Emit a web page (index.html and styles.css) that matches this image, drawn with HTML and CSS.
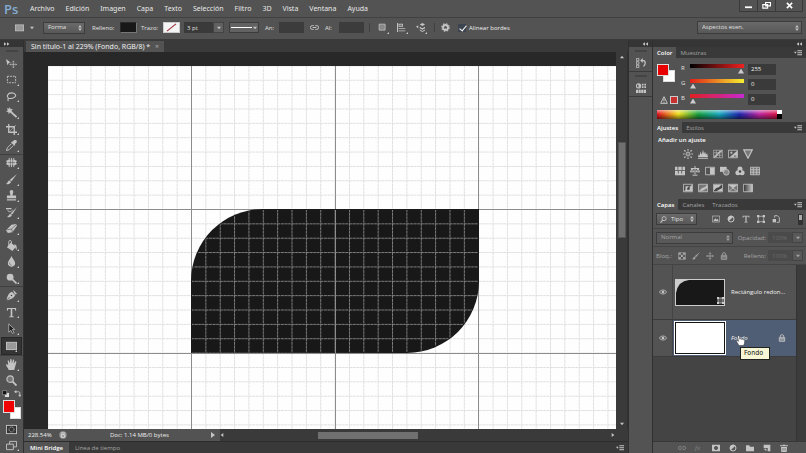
FILE: index.html
```html
<!DOCTYPE html>
<html lang="es">
<head>
<meta charset="utf-8">
<title>Sin título-1</title>
<link rel="stylesheet" href="styles.css">
</head>
<body>
<svg class="sprite" aria-hidden="true">
  <symbol id="move" viewBox="0 0 12 12"><path fill="currentColor" d="M0 1l5 4-2 .4L1.600 8z"/><path fill="none" stroke="currentColor" d="M8 3v8M4 7h8M7 4.500l1-1 1 1M7 9.500l1 1 1-1M5.500 6l-1 1 1 1M10.500 6l1 1-1 1" stroke-width=".7"/></symbol>
  <symbol id="marquee" viewBox="0 0 12 12"><rect x="1.500" y="2.500" width="9" height="7" fill="none" stroke="currentColor" stroke-dasharray="2 1"/></symbol>
  <symbol id="lasso" viewBox="0 0 12 12"><path fill="none" stroke="currentColor" stroke-width="1.200" d="M3 8C0 6 2 2 6 2s6 3 3 5-5 1-6 1c-2 1 0 2-1 3"/></symbol>
  <symbol id="wand" viewBox="0 0 12 12"><path fill="none" stroke="currentColor" stroke-width="2" d="M5 5l6.500 6"/><path fill="currentColor" d="M4 0l1 2.500L7.500 2 6 4l1 2-2.500-.5L3 8l-.5-2.500L0 5l2-1.500L1 1l2.300 1z"/></symbol>
  <symbol id="crop" viewBox="0 0 12 12"><path fill="none" stroke="currentColor" stroke-width="1.400" d="M3 0v9h9M0 3h9v9"/><path stroke="currentColor" stroke-width=".6" d="M4 8l7-7"/></symbol>
  <symbol id="dropper" viewBox="0 0 12 12"><path fill="currentColor" d="M7 2l2-2c2-.5 3.500 1 2.500 2.700L9.500 4.500l.7.700-1 1L5.500 2.600l1-1z"/><path fill="none" stroke="currentColor" d="M6 4L1.500 8.500.5 11.500l3-1L8 6"/></symbol>
  <symbol id="heal" viewBox="0 0 12 12"><rect x="1" y="3" width="10" height="6" rx="2" fill="currentColor"/><path stroke="currentColor" d="M3.500 1v10M6 1v10M8.500 1v10M0 4.500h12M0 7.500h12"/><path stroke="#555" stroke-width=".6" d="M4.800 3v6M7.300 3v6M2 6h8"/></symbol>
  <symbol id="brush" viewBox="0 0 12 12"><path fill="currentColor" d="M12 0L6 8 4 6.500zM3.500 7L5.500 8.500C5 11 2 12 0 10.500c2 0 1.500-3 3.500-3.500z"/></symbol>
  <symbol id="stamp" viewBox="0 0 12 12"><path fill="currentColor" d="M4 2a2 2 0 0 1 4 0L7 6h4v3H1V6h4zM1 10h10v1.500H1z"/></symbol>
  <symbol id="history" viewBox="0 0 12 12"><path fill="currentColor" d="M12 0L7 8 5 7zM4.500 7.500l2 1C6 11 3 12 1 10.500c2 0 1.500-2 3.500-3zM0 1h6v1.500H0z"/><path fill="none" stroke="currentColor" d="M2 3c0 3 4 3 5 0"/></symbol>
  <symbol id="eraser" viewBox="0 0 12 12"><path fill="currentColor" d="M6 2l5-1 1 2-5 7-5 1-2-3z"/><path fill="none" stroke="#5c5c5c" stroke-width=".8" d="M1 7.500l5-1 5.500-5M6 6.500L7 10"/></symbol>
  <symbol id="bucket" viewBox="0 0 12 12"><path fill="currentColor" d="M5 3l6 4-4 5-6-4z"/><path fill="none" stroke="currentColor" d="M6 6V2c0-2-3-2-3 0v5"/><path fill="currentColor" d="M9 5c3 0 3 3 2.500 6C10 9 10 7 9 5z"/></symbol>
  <symbol id="drop" viewBox="0 0 12 12"><path fill="currentColor" d="M6 0c1 3 4 5 4 8 0 5-8 5-8 0 0-3 3-5 4-8z"/><path stroke="#777" fill="none" d="M4 7c-.5 2 .5 3 2 3"/></symbol>
  <symbol id="dodge" viewBox="0 0 12 12"><circle cx="4.500" cy="4.500" r="3.700" fill="currentColor"/><path stroke="currentColor" stroke-width="1.800" d="M7 7l4.500 4.500"/></symbol>
  <symbol id="pen" viewBox="0 0 12 12"><path fill="currentColor" d="M8 0l4 4-2 1-2-3.500zM6.500 2L10 5.500C9 9 5 10 1 11.500L4.500 8 4 7.500.5 11C1.500 7 3 3 6.500 2z"/><circle cx="6" cy="6" r=".9" fill="#444"/></symbol>
  <symbol id="type" viewBox="0 0 12 12"><path fill="currentColor" d="M1 1h10v3h-.8L9.500 2.200H6.900v7.800l1.600.4v.8h-5v-.8l1.600-.4V2.200H2.500L1.800 4H1z"/></symbol>
  <symbol id="pick" viewBox="0 0 12 12"><path fill="#222" stroke="currentColor" stroke-width=".8" d="M3 1l6.500 6H7l1.700 3.500-1.700.8L5.400 8 3 10z"/></symbol>
  <symbol id="rect" viewBox="0 0 12 12"><rect x=".5" y="2.500" width="11" height="8" fill="#999" stroke="currentColor"/></symbol>
  <symbol id="hand" viewBox="0 0 12 12"><path fill="currentColor" d="M3 12C2 9 0 8 0 6c1-.6 2 .5 2.500 1L1.800 2c.8-1 1.600 0 1.700.6L4.300 5 4.600.6c.8-1 1.600-.2 1.600.4l.2 4L7.500 1c.8-.8 1.600 0 1.400.7L8.400 5.500l1.700-3c1-.5 1.400.4 1.200 1L9.800 9 9 12z"/></symbol>
  <symbol id="zoom" viewBox="0 0 12 12"><circle cx="4.500" cy="4.500" r="3.500" fill="#777" stroke="currentColor" stroke-width="1.300"/><path stroke="currentColor" stroke-width="2" d="M7.200 7.200l4.300 4.300"/></symbol>
  <symbol id="mask" viewBox="0 0 12 12"><rect x=".5" y="1.500" width="11" height="9" fill="#333" stroke="currentColor"/><circle cx="6" cy="6" r="2.700" fill="#333" stroke="currentColor" stroke-dasharray="1 .6"/></symbol>
  <symbol id="screen" viewBox="0 0 12 12"><path fill="#555" stroke="currentColor" d="M4 1.500h7.500v6H4z"/><path fill="#555" stroke="currentColor" d="M.5 4.500H8v6H.5z"/></symbol>
  <symbol id="swap" viewBox="0 0 12 12"><path fill="none" stroke="currentColor" stroke-width="1.500" d="M3 3h5q2 0 2 2v4"/><path fill="currentColor" d="M4 0v6L0 3zM7 8h6l-3 4z"/></symbol>
  <symbol id="default" viewBox="0 0 12 12"><path fill="#ddd" d="M5 5h7v7H5z"/><path fill="#111" stroke="#aaa" d="M1 1h7v7H1z"/></symbol>
  <symbol id="link" viewBox="0 0 12 12"><path fill="none" stroke="currentColor" stroke-width="1.300" d="M5 3.500H3a2.500 2.500 0 0 0 0 5h2M7 3.500h2a2.500 2.500 0 0 1 0 5H7M3.500 6h5"/></symbol>
  <symbol id="combine" viewBox="0 0 12 12"><path fill="#888" stroke="currentColor" d="M1.500 1.500h8v8h-8z"/></symbol>
  <symbol id="align" viewBox="0 0 12 12"><path fill="currentColor" d="M0 0h1.300v12H0zM2 1h6v4H2zM2 7h9v1H2zM2 10h9v1H2z"/><path fill="#777" d="M3 2h4v2H3z"/></symbol>
  <symbol id="arrange" viewBox="0 0 12 12"><path fill="currentColor" d="M5 2l3.500-2L12 2 8.500 4zM5 5l3.500 2L12 5v2L8.500 9 5 7zM5 8.500l3.500 2 3.500-2v1.500L8.500 12 5 10zM0 5l3-2v4z"/></symbol>
  <symbol id="gear" viewBox="0 0 12 12"><circle cx="6" cy="6" r="3.300" fill="none" stroke="currentColor" stroke-width="2.600"/><circle cx="6" cy="6" r="5" fill="none" stroke="currentColor" stroke-width="1.600" stroke-dasharray="2 1.930"/></symbol>
  <symbol id="menu" viewBox="0 0 12 12"><path fill="currentColor" d="M0 4h4L2 7zM5 2h7v1.300H5zM5 5h7v1.300H5zM5 8h7v1.300H5z"/></symbol>
  <symbol id="spin" viewBox="0 0 6 10"><path fill="currentColor" d="M0 4l3-4 3 4zM0 6h6l-3 4z"/></symbol>
  <symbol id="down" viewBox="0 0 6 6"><path fill="currentColor" d="M0 1h6L3 5z"/></symbol>
  <symbol id="left" viewBox="0 0 6 6"><path fill="currentColor" d="M5 0v6L1 3z"/></symbol>
  <symbol id="right" viewBox="0 0 6 6"><path fill="currentColor" d="M1 0l4 3-4 3z"/></symbol>
  <symbol id="up" viewBox="0 0 6 6"><path fill="currentColor" d="M0 5l3-4 3 4z"/></symbol>
  <symbol id="collapse" viewBox="0 0 10 6"><path fill="currentColor" d="M5 0v6L1 3zM10 0v6L6 3z"/></symbol>
  <symbol id="expand" viewBox="0 0 10 6"><path fill="currentColor" d="M0 0l4 3-4 3zM5 0l4 3-4 3z"/></symbol>
  <symbol id="histpanel" viewBox="0 0 12 12"><path fill="none" stroke="currentColor" d="M.5.5h3v3h-3zM.5 4.500h3v3h-3zM.5 8.500h3v3h-3z"/><path fill="none" stroke="currentColor" stroke-width="1.500" d="M7 3h2q2 0 2 3c0 2-1 3-2 4"/><path fill="currentColor" d="M8 0v6L5 3z"/></symbol>
  <symbol id="props" viewBox="0 0 12 12"><circle cx="3" cy="3.500" r="2.500" fill="none" stroke="currentColor" stroke-width="1.300"/><path fill="currentColor" d="M3 1a2.500 2.500 0 0 1 0 5zM7 1h2v2H7zM10 1h2v2h-2zM7 4h2v2H7zM10 4h2v2h-2zM0 8h12v4H0z"/><path stroke="#555" d="M3 8v4M6 8v4M9 8v4" stroke-width=".6"/></symbol>
  <symbol id="warn" viewBox="0 0 12 12"><path fill="none" stroke="currentColor" stroke-width="1.500" d="M6 1l5 10H1zM6 4v4M6 9v1.300"/></symbol>
  <symbol id="sun" viewBox="0 0 12 12"><circle cx="6" cy="6" r="2.400" fill="#777" stroke="currentColor"/><path stroke="currentColor" stroke-width="1.300" d="M6 0v2M6 10v2M0 6h2M10 6h2M1.500 1.500L3 3M9 9l1.500 1.500M1.500 10.500L3 9M9 3l1.500-1.500"/></symbol>
  <symbol id="levels" viewBox="0 0 12 12"><path fill="currentColor" d="M0 10l1-4 1 2 1-5 1.500 4L6 1l1.200 5L8.500 3l1 4 1.500-2 1 5zM0 11h12v1H0z"/></symbol>
  <symbol id="curves" viewBox="0 0 12 12"><path fill="none" stroke="currentColor" d="M.5 1.500h11v9H.5zM4 2v8M8 2v8M1 4.500h10M1 7.500h10" stroke-width=".7"/><path fill="none" stroke="currentColor" stroke-width="1.600" d="M1 10C5 9 6 3 11 2"/></symbol>
  <symbol id="expo" viewBox="0 0 12 12"><path fill="none" stroke="currentColor" d="M.5 1.500h11v9H.5z"/><path fill="currentColor" d="M11 2v8H2z"/><path stroke="currentColor" d="M2.500 4.500h3M4 3v3"/><path stroke="#444" d="M7 8.500h3"/></symbol>
  <symbol id="vibrance" viewBox="0 0 12 12"><path fill="#777" stroke="currentColor" stroke-width="1.400" d="M.8 1h10.400L6 11z"/></symbol>
  <symbol id="hue" viewBox="0 0 12 12"><path fill="currentColor" d="M0 1h3v4H0zM4 1h4v4H4zM9 1h3v4H9zM0 6h12v5H0z"/><path stroke="#555" d="M4 6v3M8 6v3"/></symbol>
  <symbol id="balance" viewBox="0 0 12 12"><path fill="none" stroke="currentColor" stroke-width="1.200" d="M6 0v10M3 11h6M1 3h10M2.500 3L.5 7h4zM9.500 3l-2 4h4z"/></symbol>
  <symbol id="bw" viewBox="0 0 12 12"><path fill="none" stroke="currentColor" d="M.5 1.500h11v9H.5z"/><path fill="currentColor" d="M6 2h5v8H6z"/></symbol>
  <symbol id="photo" viewBox="0 0 12 12"><path fill="currentColor" d="M0 1h8v6H0z"/><circle cx="7.500" cy="7.500" r="3.500" fill="#888" stroke="currentColor"/></symbol>
  <symbol id="mixer" viewBox="0 0 12 12"><circle cx="6" cy="3.500" r="3" fill="currentColor"/><circle cx="3.500" cy="8" r="3" fill="currentColor"/><circle cx="8.500" cy="8" r="3" fill="currentColor"/><circle cx="6" cy="6.600" r="1.500" fill="#444"/></symbol>
  <symbol id="table" viewBox="0 0 12 12"><path fill="#777" stroke="currentColor" d="M.5 1.500h11v9H.5zM.5 4.500h11M.5 7.500h11M4 1.500v9M8 1.500v9"/></symbol>
  <symbol id="invert" viewBox="0 0 12 12"><path fill="none" stroke="currentColor" d="M.5 1.500h11v9H.5z"/><path fill="currentColor" d="M1 10l10-8v8zM3 4h4v4H3z"/><path fill="#444" d="M5 6l3-2v4H5z"/></symbol>
  <symbol id="poster" viewBox="0 0 12 12"><path fill="#777" stroke="currentColor" d="M.5 1.500h11v9H.5z"/><path fill="currentColor" d="M1 10l4-4 3-1 3-3v4L6 9z"/></symbol>
  <symbol id="thresh" viewBox="0 0 12 12"><path fill="#444" stroke="currentColor" d="M.5 1.500h11v9H.5z"/><path fill="currentColor" d="M1 2h9L7 5 4 6 1 9zM11 6v4H4l3-2z"/></symbol>
  <symbol id="select" viewBox="0 0 12 12"><path fill="#777" stroke="currentColor" d="M.5 1.500h11v9H.5zM1 2l10 8M11 2L1 10"/><path fill="currentColor" d="M1 2h10L6 6z"/></symbol>
  <linearGradient id="grey"><stop stop-color="#333"/><stop offset="1" stop-color="#ccc"/></linearGradient>
  <symbol id="gmap" viewBox="0 0 12 12"><path fill="url(#grey)" stroke="currentColor" d="M.5 1.500h11v9H.5z"/></symbol>
  <symbol id="image" viewBox="0 0 12 12"><path fill="#555" stroke="currentColor" d="M.5 1.500h11v9H.5z"/><path fill="currentColor" d="M2 9l3-4 2 2 1.500-1.500L10 9z"/></symbol>
  <symbol id="adjust" viewBox="0 0 12 12"><circle cx="6" cy="6" r="4.500" fill="#555" stroke="currentColor" stroke-width="1.500"/><path fill="currentColor" d="M2.500 9.500l7-7A5 5 0 0 0 2.500 9.500z"/></symbol>
  <symbol id="shape" viewBox="0 0 12 12"><path fill="none" stroke="currentColor" d="M2 2h8v8H2z"/><path fill="currentColor" d="M0 0h3.500v3.500H0zM8.500 0H12v3.500H8.500zM0 8.500h3.500V12H0zM8.500 8.500H12V12H8.500z"/></symbol>
  <symbol id="smart" viewBox="0 0 12 12"><path fill="none" stroke="currentColor" stroke-width="1.300" d="M4 4V1h4l3 3v7H7"/><path fill="currentColor" d="M1 6h5v5H1z"/></symbol>
  <symbol id="checker" viewBox="0 0 12 12"><path fill="none" stroke="currentColor" d="M1 1h10v10H1z"/><path fill="currentColor" d="M1 1h3.300v3.300H1zM7.600 1H11v3.300H7.600zM4.300 4.300h3.300v3.300H4.300zM1 7.600h3.300V11H1zM7.600 7.600H11V11H7.600z"/></symbol>
  <symbol id="cross" viewBox="0 0 12 12"><path fill="none" stroke="currentColor" stroke-width="1.200" d="M6 1v10M1 6h10M4.500 2.500L6 1l1.500 1.500M4.500 9.500L6 11l1.500-1.500M2.500 4.500L1 6l1.500 1.500M9.500 4.500L11 6 9.500 7.500"/></symbol>
  <symbol id="lock" viewBox="0 0 12 12"><path fill="none" stroke="currentColor" stroke-width="1.300" d="M3.500 5V3.500a2.500 2.500 0 0 1 5 0V5M2 5h8v6H2zM2 7h8M2 9h8"/></symbol>
  <symbol id="eye" viewBox="0 0 12 12"><path fill="none" stroke="currentColor" stroke-width="1.200" d="M.5 6C3 2 9 2 11.500 6 9 10 3 10 .5 6z"/><circle cx="6" cy="6" r="2" fill="currentColor"/></symbol>
  <symbol id="addmask" viewBox="0 0 12 12"><path fill="currentColor" fill-rule="evenodd" d="M0 1h12v10H0zM6 3a3 3 0 1 0 .01 0z"/></symbol>
  <symbol id="folder" viewBox="0 0 12 12"><path fill="currentColor" d="M0 2h5l1 2h6v7H0z"/></symbol>
  <symbol id="new" viewBox="0 0 12 12"><path fill="currentColor" d="M1 1h10v10H7V6H1z"/><path fill="currentColor" d="M1 7l4 4V7z"/></symbol>
  <symbol id="trash" viewBox="0 0 12 12"><path fill="currentColor" d="M0 2h4V1h4v1h4v1.500H0zM1.500 4.500h9L10 12H2z"/><path stroke="#555" d="M4.500 6v4M7.500 6v4"/></symbol>
  <symbol id="glass" viewBox="0 0 12 12"><circle cx="7" cy="4.500" r="3.500" fill="none" stroke="currentColor" stroke-width="1.500"/><path stroke="currentColor" stroke-width="2" d="M4.500 7L1 11.500"/></symbol>
</svg>

<header class="menubar">
  <span class="logo">Ps</span>
  <nav class="menus" aria-label="Menú">
    <a href="#">Archivo</a><a href="#">Edición</a><a href="#">Imagen</a><a href="#">Capa</a><a href="#">Texto</a><a href="#">Selección</a><a href="#">Filtro</a><a href="#">3D</a><a href="#">Vista</a><a href="#">Ventana</a><a href="#">Ayuda</a>
  </nav>
  <div class="winbtns">
    <button aria-label="Minimizar"><svg viewBox="0 0 10 8"><path d="M1 5h8v2H1z" fill="#fff"/></svg></button>
    <button aria-label="Restaurar"><svg viewBox="0 0 10 8"><path d="M4 .5h5.500v4H4z M.8 3h5.500v4H.8z" fill="#555" stroke="#fff" stroke-width="1.300"/></svg></button>
    <button class="close" aria-label="Cerrar"><svg viewBox="0 0 10 8"><path d="M2 1l6 6M8 1L2 7" stroke="#fff" stroke-width="1.800"/></svg></button>
  </div>
</header>

<section class="options" aria-label="Opciones">
  <button class="preset" aria-label="Rectángulo"><svg class="i10"><use href="#rect"/></svg><svg class="i4"><use href="#down"/></svg></button>
  <span class="pick mode"><select aria-label="Modo"><option>Forma</option></select><svg><use href="#spin"/></svg></span>
  <span class="lbl fill">Relleno:</span><button class="paint dark" aria-label="Relleno"></button>
  <span class="lbl stroke">Trazo:</span><button class="paint none" aria-label="Trazo"><svg viewBox="0 0 16 10"><path d="M3 9L13 1" stroke="#a0303c" stroke-width="1.300"/></svg></button>
  <input class="size" aria-label="Grosor" value="3 pt"><button class="drop" aria-label="Grosores"><svg class="i4"><use href="#down"/></svg></button>
  <button class="line" aria-label="Tipo de trazo"><i></i><svg class="i4"><use href="#down"/></svg></button>
  <label class="dim">An: <input></label>
  <svg class="i10 chain"><use href="#link"/></svg>
  <label class="dim">Al: <input></label>
  <div class="ops">
    <button class="more" aria-label="Combinar"><svg class="i10"><use href="#combine"/></svg></button>
    <button class="more" aria-label="Alinear"><svg class="i10"><use href="#align"/></svg></button>
    <button class="more" aria-label="Organizar"><svg class="i10"><use href="#arrange"/></svg></button>
  </div>
  <button class="gear more" aria-label="Geometría"><svg class="i10"><use href="#gear"/></svg></button>
  <label class="check"><input type="checkbox" checked>Alinear bordes</label>
  <span class="pick space"><select aria-label="Espacio de trabajo"><option>Aspectos esen.</option></select><svg><use href="#spin"/></svg></span>
</section>

<main class="work">
  <aside class="tools">
    <div class="cap"><svg><use href="#expand"/></svg></div>
    <div class="grip"></div>
    <div class="toollist">
      <button aria-label="Mover"><svg><use href="#move"/></svg></button>
      <button class="more" aria-label="Marco"><svg><use href="#marquee"/></svg></button>
      <button class="more" aria-label="Lazo"><svg><use href="#lasso"/></svg></button>
      <button class="more" aria-label="Varita"><svg><use href="#wand"/></svg></button>
      <button class="more" aria-label="Recortar"><svg><use href="#crop"/></svg></button>
      <button class="more" aria-label="Cuentagotas"><svg><use href="#dropper"/></svg></button>
      <button class="more rule" aria-label="Corrector"><svg><use href="#heal"/></svg></button>
      <button class="more" aria-label="Pincel"><svg><use href="#brush"/></svg></button>
      <button class="more" aria-label="Tampón"><svg><use href="#stamp"/></svg></button>
      <button class="more" aria-label="Pincel de historia"><svg><use href="#history"/></svg></button>
      <button class="more" aria-label="Borrador"><svg><use href="#eraser"/></svg></button>
      <button class="more" aria-label="Bote"><svg><use href="#bucket"/></svg></button>
      <button class="more" aria-label="Desenfocar"><svg><use href="#drop"/></svg></button>
      <button class="more" aria-label="Sobreexponer"><svg><use href="#dodge"/></svg></button>
      <button class="more rule" aria-label="Pluma"><svg><use href="#pen"/></svg></button>
      <button class="more" aria-label="Texto"><svg><use href="#type"/></svg></button>
      <button class="more" aria-label="Selección"><svg><use href="#pick"/></svg></button>
      <button class="more on" aria-label="Rectángulo"><svg><use href="#rect"/></svg></button>
      <button class="more rule" aria-label="Mano"><svg><use href="#hand"/></svg></button>
      <button aria-label="Zoom"><svg><use href="#zoom"/></svg></button>
    </div>
    <div class="mini"><svg><use href="#default"/></svg><svg><use href="#swap"/></svg></div>
    <div class="swatches"><button class="bg" aria-label="Fondo"></button><button class="fg" aria-label="Frontal"></button></div>
    <button class="foot" aria-label="Máscara rápida"><svg><use href="#mask"/></svg></button>
    <button class="foot more" aria-label="Pantalla"><svg><use href="#screen"/></svg></button>
  </aside>

  <section class="doc">
    <div class="doctabs"><button class="doctab">Sin título-1 al 229% (Fondo, RGB/8) * <span>×</span></button></div>
    <div class="stage">
      <svg class="canvas" viewBox="0 0 568 363" preserveAspectRatio="xMinYMin slice" role="img" aria-label="Rectángulo redondeado">
        <defs>
          <pattern id="gv" x="143" y="143" width="14.360" height="14.360" patternUnits="userSpaceOnUse"><path d="M.5 0v14.360M0 .5h14.360" stroke="#dcdcdc" stroke-width=".9" stroke-dasharray="3 .6"/></pattern>
          <pattern id="gd" x="143" y="143" width="14.360" height="14.360" patternUnits="userSpaceOnUse"><path d="M.5 0v14.360M0 .5h14.360" stroke="#8a8a8a" stroke-width=".9" stroke-dasharray="3 .6"/></pattern>
        </defs>
        <path fill="#fefefe" d="M0 0h568v363H0z"/>
        <path fill="url(#gv)" d="M0 0h568v363H0z"/>
        <path stroke="#8c8c8c" fill="none" d="M143.500 0v363M287.500 0v363M430.500 0v363M0 143.500h568M0 287.500h568"/>
        <path fill="#181818" d="M143 287V215A72 72 0 0 1 215 143H431V215A72 72 0 0 1 359 287z"/>
        <path fill="url(#gd)" d="M144 287V215A71 71 0 0 1 215 144H430V215A71 71 0 0 1 359 286L144 287z"/>
        <path stroke="#8c8c8c" fill="none" d="M287.500 144v143"/>
      </svg>
      <div class="vscroll"><svg class="i4"><use href="#up"/></svg><i></i><svg class="i4"><use href="#down"/></svg></div>
    </div>
    <div class="status">
      <span class="zoomval">228.54%</span>
      <svg class="i8" viewBox="0 0 12 12"><circle cx="6" cy="6" r="5.500" fill="#999"/><path d="M3 3h6M3.500 5.500h5v4h-5z" stroke="#eee" fill="none"/></svg>
      <span class="info">Doc: 1.14 MB/0 bytes</span>
      <svg class="i6"><use href="#right"/></svg>
      <div class="hscroll"><svg class="i4"><use href="#left"/></svg><i></i><svg class="i4"><use href="#right"/></svg></div>
    </div>
    <div class="tabs bottom"><button class="on">Mini Bridge</button><button>Línea de tiempo</button><svg class="pm"><use href="#menu"/></svg></div>
  </section>

  <aside class="dock">
    <div class="cap end"><svg><use href="#collapse"/></svg></div>
    <div class="grip"></div><button aria-label="Historia"><svg><use href="#histpanel"/></svg></button>
    <div class="grip"></div><button aria-label="Propiedades"><svg><use href="#props"/></svg></button>
  </aside>

  <aside class="panels">
    <div class="cap end"><svg><use href="#collapse"/></svg></div>
    <div class="tabs"><button class="on">Color</button><button>Muestras</button><svg class="pm"><use href="#menu"/></svg></div>
    <div class="color">
      <div class="pair">
        <div class="chips"><i class="white"></i><i class="red"></i></div>
        <div class="gamut"><svg><use href="#warn"/></svg><i></i></div>
      </div>
      <div class="sliders">
        <label class="chan r"><span>R</span><input type="range" min="0" max="255" value="255"><output>255</output></label>
        <label class="chan g"><span>G</span><input type="range" min="0" max="255" value="0"><output>0</output></label>
        <label class="chan b"><span>B</span><input type="range" min="0" max="255" value="0"><output>0</output></label>
      </div>
      <div class="spectrum"><i></i></div>
    </div>

    <div class="tabs"><button class="on">Ajustes</button><button>Estilos</button><svg class="pm"><use href="#menu"/></svg></div>
    <div class="adjust">
      <p>Añadir un ajuste</p>
      <div><svg><use href="#sun"/></svg><svg><use href="#levels"/></svg><svg><use href="#curves"/></svg><svg><use href="#expo"/></svg><svg><use href="#vibrance"/></svg></div>
      <div><svg><use href="#hue"/></svg><svg><use href="#balance"/></svg><svg><use href="#bw"/></svg><svg><use href="#photo"/></svg><svg><use href="#mixer"/></svg><svg><use href="#table"/></svg></div>
      <div><svg><use href="#invert"/></svg><svg><use href="#poster"/></svg><svg><use href="#thresh"/></svg><svg><use href="#select"/></svg><svg><use href="#gmap"/></svg></div>
    </div>

    <div class="tabs"><button class="on">Capas</button><button>Canales</button><button>Trazados</button><svg class="pm"><use href="#menu"/></svg></div>
    <div class="row filter">
      <span class="pick kind"><svg class="glass"><use href="#glass"/></svg><select aria-label="Filtro"><option>Tipo</option></select><svg><use href="#spin"/></svg></span>
      <div class="kinds"><svg><use href="#image"/></svg><svg><use href="#adjust"/></svg><svg><use href="#type"/></svg><svg><use href="#shape"/></svg><svg><use href="#smart"/></svg></div>
      <button class="toggle" aria-label="Activar filtro"></button>
    </div>
    <div class="row dim-row">
      <span class="pick blend"><select aria-label="Fusión"><option>Normal</option></select><svg><use href="#spin"/></svg></span>
      <label>Opacidad: <input value="100%"></label><button class="drop" aria-label="Opacidad"><svg class="i4"><use href="#down"/></svg></button>
    </div>
    <div class="row dim-row locks">
      <span>Bloq.:</span>
      <div class="lockset"><svg><use href="#checker"/></svg><svg><use href="#brush"/></svg><svg><use href="#cross"/></svg><svg><use href="#lock"/></svg></div>
      <label>Relleno: <input value="100%"></label><button class="drop" aria-label="Relleno de capa"><svg class="i4"><use href="#down"/></svg></button>
    </div>
    <div class="layers">
      <div class="list">
        <div class="layer tall">
          <button class="vis" aria-label="Visibilidad"><svg><use href="#eye"/></svg></button>
          <svg class="thumb" viewBox="0 0 50 27"><path fill="#ccc" d="M0 0h50v27H0z"/><path fill="#181818" d="M1 26V14Q3 2 14 1h35v25z"/><path d="M43 19h5v5h-5z" fill="#555" stroke="#aaa"/><path d="M42 18h2v2h-2zM47 18h2v2h-2zM42 23h2v2h-2zM47 23h2v2h-2z" fill="#ccc"/></svg>
          <span class="name">Rectángulo redon...</span>
        </div>
        <div class="layer sel">
          <button class="vis" aria-label="Visibilidad"><svg><use href="#eye"/></svg></button>
          <div class="thumb blank"></div>
          <span class="name it">Fondo</span>
          <svg class="lk"><use href="#lock"/></svg>
          <svg class="cursor" viewBox="0 0 12 14"><path fill="#fff" stroke="#333" stroke-width=".6" d="M3.500 13L1 8.500C0 7 1 6 2.500 7.500L3 8 2 2c0-1.500 1.800-1.500 2 0l.6 3.500c.8-1 1.700-.6 2 .2.800-.7 1.600-.3 1.900.5.9-.5 2 0 2 1.300L10 11l-1 2z"/></svg>
          <span class="tip" role="tooltip">Fondo</span>
        </div>
      </div>
      <div class="lscroll"></div>
    </div>
    <div class="panelfoot">
      <svg class="off"><use href="#link"/></svg><span class="off">fx</span><svg><use href="#addmask"/></svg><svg><use href="#adjust"/></svg><svg><use href="#folder"/></svg><svg><use href="#new"/></svg><svg><use href="#trash"/></svg>
    </div>
  </aside>
</main>
</body>
</html>
```
FILE: styles.css
```css
* { box-sizing: border-box; }
html, body { height: 100%; }
body {
  margin: 0;
  display: flex;
  flex-direction: column;
  background: #535353;
  color: #e0e0e0;
  font: 6px/8px "Open Sans", "Noto Sans", sans-serif;
  overflow: hidden;
}
button, input, select {
  font: inherit;
  color: inherit;
  margin: 0;
  padding: 0;
  border: 0;
  background: none;
  border-radius: 0;
  outline: 0;
  appearance: none;
}
a { color: inherit; text-decoration: none; }
svg { display: block; flex: none; color: #c4c4c4; }
.sprite { position: absolute; width: 0; height: 0; }
.i4 { width: 4px; height: 4px; }
.i6 { width: 6px; height: 6px; }
.i8 { width: 8px; height: 8px; }
.i10 { width: 9px; height: 9px; }

/* menu bar */
.menubar { flex: none; height: 18px; display: flex; align-items: center; border-bottom: 1px solid #414141; }
.logo { width: 30px; padding-left: 4px; font-size: 13px; line-height: 16px; font-weight: 600; color: #83add2; }
.menus { display: flex; gap: 11px; font: 7px/16px "Noto Sans", sans-serif; color: #e8e8e8; }
.winbtns { display: flex; margin-left: auto; align-self: flex-start; height: 12px; padding-right: 3px; }
.winbtns button { width: 18px; border: solid #3a3a3a; border-width: 0 0 1px 1px; display: grid; place-items: center; }
.winbtns .close { width: 28px; border-right-width: 1px; }
.winbtns svg { width: 9px; height: 7px; }

/* options bar */
.options { flex: none; height: 22px; display: flex; align-items: center; border-bottom: 1px solid #3a3a3a; padding: 0 4px 2px 15px; }
.preset { display: flex; align-items: center; gap: 6px; width: 28px; }
.pick { position: relative; display: flex; align-items: center; height: 12px; background: linear-gradient(#6a6a6a, #585858); border: 1px solid #3c3c3c; }
.pick select { flex: 1; min-width: 0; height: 10px; padding: 0 4px; line-height: 9px; }
.pick svg { width: 4px; height: 6px; margin-right: 2px; }
.mode { width: 42px; }
.lbl { flex: none; }
.fill { width: 35px; padding-left: 7px; }
.stroke { width: 26px; padding-left: 4px; }
.paint { width: 17px; height: 11px; border: 1px solid #ccc; flex: none; }
.paint svg { width: 100%; height: 100%; }
.dark { background: #181818; border-color: #2a2a2a #777 #777 #2a2a2a; }
.none { background: #f4f4f4; }
.size { width: 29px; height: 11px; margin-left: 4px; padding-left: 3px; background: #3a3a3a; }
.drop { width: 11px; height: 11px; display: grid; place-items: center; background: #606060; border: 1px solid #444; flex: none; }
.line { width: 30px; height: 11px; margin: 0 6px 0 5px; display: flex; align-items: center; gap: 1px; padding: 0 1px; background: #626262; border: 1px solid #3c3c3c; }
.line i { flex: 1; height: 1px; background: #fff; }
.dim { display: flex; align-items: center; justify-content: space-between; width: 39px; }
.dim input { width: 25px; height: 11px; background: #3c3c3c; }
.chain { margin: 0 6px; }
.ops { display: flex; gap: 10px; margin-left: 5px; padding: 0 9px 0 8px; border: solid #404040; border-width: 0 1px; }
.gear { margin: 0 8px 0 6px; }
.ops .more::after, .gear::after { right: -2px; bottom: -2px; }
.check { display: flex; align-items: center; gap: 3px; color: #eee; }
.check input { width: 8px; height: 8px; background: #3c4450; position: relative; }
.check input::after { content: ""; position: absolute; left: 3px; top: 0; width: 3px; height: 6px; border: solid #fff; border-width: 0 1px 1px 0; transform: rotate(40deg); }
.space { width: 105px; margin-left: auto; height: 13px; }

/* work area */
.work { flex: 1; min-height: 0; display: grid; grid-template-columns: 24px minmax(0, 1fr) 25px 153px; background: #3a3a3a; }
.cap { flex: none; height: 7px; padding: 1px 4px; background: #353535; display: flex; align-items: center; }
.cap svg { width: 6px; height: 4px; }
.end { justify-content: flex-end; }
.grip { flex: none; height: 8px; display: grid; place-items: center; }
.grip::after { content: ""; width: 12px; height: 2px; background: #444; }

.tools { display: flex; flex-direction: column; min-height: 0; background: #535353; border-right: 1px solid #303030; }
.toollist { flex: 1; min-height: 0; display: flex; flex-direction: column; }
.toollist button { flex: 1; min-height: 0; display: grid; place-items: center; }
.toollist svg { width: 11px; height: 11px; }
.more { position: relative; }
.more::after { content: ""; position: absolute; right: 4px; bottom: 2px; border: 1px solid; border-color: transparent #ccc #ccc transparent; }
.rule { border-top: 1px solid #404040; }
.on.more { background: #343434; border: 1px solid #282828; margin: 0 1px; }
.mini { flex: none; height: 10px; display: flex; gap: 5px; padding: 1px 0 0 2px; }
.mini svg { width: 7px; height: 7px; }
.swatches { flex: none; height: 22px; display: grid; grid-template: 7px 6px 6px / 7px 5px 6px; padding: 1px 0 0 3px; }
.swatches button { border: 1px solid #ddd; }
.fg { grid-area: 1 / 1 / 3 / 3; background: #f00000; }
.bg { grid-area: 2 / 2 / 4 / 4; background: #fff; }
.foot { flex: none; height: 16px; display: grid; place-items: center; }
.foot svg { width: 11px; height: 11px; }

.doc { min-width: 0; min-height: 0; display: flex; flex-direction: column; }
.doctabs { flex: none; height: 12px; background: #3a3a3a; padding: 1px 0 0 2px; }
.doctab { height: 11px; padding: 0 5px; background: #535353; color: #eee; font: 7px/10px "Noto Sans", sans-serif; }
.doctab span { padding-left: 3px; color: #aaa; }
.stage { flex: 1; min-height: 0; display: flex; background: #282828; }
.canvas { flex: 1; min-width: 0; height: auto; margin: 14px 0 0 24px; }
.vscroll { width: 12px; background: #3a3a3a; display: grid; grid-template-rows: 10px 1fr 10px; justify-items: center; align-items: center; border-right: 1px solid #303030; }
.vscroll i { width: 8px; height: 27%; align-self: start; margin-top: 80px; background: #707070; border: 1px solid #555; }
.status { flex: none; height: 12px; display: flex; align-items: center; background: #535353; }
.zoomval { width: 35px; padding-left: 4px; color: #eee; }
.info { width: 143px; padding-left: 43px; color: #eee; }
.status .i6 { margin-right: 1px; }
.hscroll { flex: 1; margin-left: 3px; height: 12px; display: grid; grid-template-columns: 6px 1fr 6px; align-items: center; background: #3a3a3a; padding: 0 11px 0 0; }
.hscroll i { width: 26%; height: 7px; margin-left: 24%; background: #707070; }

.tabs { flex: none; height: 11px; display: flex; background: #393939; color: #a4a4a4; }
.tabs button { padding: 0 4px; line-height: 10px; }
.tabs button.on { background: #535353; color: #fff; font-weight: 600; }
.pm { width: 8px; height: 8px; margin: 2px 4px 0 auto; }
.bottom { height: 12px; border-top: 1px solid #2c2c2c; }
.bottom button { padding: 0 6px; }

.dock { display: flex; flex-direction: column; background: #535353; border-left: 1px solid #303030; border-right: 1px solid #303030; }
.dock button { height: 17px; display: grid; place-items: center; border-bottom: 1px solid #3a3a3a; }
.dock button svg { width: 10px; height: 10px; }

.panels { display: flex; flex-direction: column; min-height: 0; background: #535353; }
.color { flex: none; height: 64px; display: grid; grid-template: 48px 1fr / 24px 1fr; padding: 4px 24px 0 4px; }
.pair { display: flex; flex-direction: column; justify-content: space-between; padding: 2px 0 6px; }
.chips { display: grid; grid-template: 6px 6px 6px / 6px 6px 6px; }
.chips i { border: 1px solid #ddd; }
.red { grid-area: 1 / 1 / 3 / 3; background: #e80000; }
.white { grid-area: 2 / 2 / 4 / 4; background: #fff; }
.gamut { display: flex; gap: 2px; padding-left: 3px; }
.gamut svg { width: 8px; height: 8px; }
.gamut i { width: 8px; height: 8px; background: #c83030; border: 1px solid #ccc; }
.sliders { display: flex; flex-direction: column; gap: 3px; padding: 0 6px 0 0; }
.chan { height: 12px; display: grid; grid-template-columns: 5px 54px 1fr; gap: 4px; align-items: start; }
.chan output { background: #3a3a3a; color: #eee; height: 11px; padding-left: 3px; line-height: 11px; margin-top: 2px; }
.chan input { width: 100%; height: 11px; margin-top: 2px; background: linear-gradient(90deg, #000, #f02020) top / 100% 4px no-repeat; }
.chan span { margin-top: 2px; }
.chan.g input { background-image: linear-gradient(90deg, #e02018, #f4f030); }
.chan.b input { background-image: linear-gradient(90deg, #e02020, #c828d0); }
.chan input::-webkit-slider-thumb { appearance: none; width: 6px; height: 5px; margin-top: 3px; background: #ccc; clip-path: polygon(50% 0, 100% 100%, 0 100%); }
.spectrum { grid-column: 1 / 3; height: 9px; display: flex; justify-content: flex-end; background: linear-gradient(#fff8, #fff0 45%, #0008), linear-gradient(90deg, #e01020, #f0e020 17%, #18a040 33%, #18a8c0 50%, #2028b0 66%, #c028a0 82%, #e01030); }
.spectrum i { width: 5px; background: linear-gradient(#fff 50%, #000 50%); }

.adjust { flex: none; height: 66px; }
.adjust p { margin: 0; padding: 3px 5px 1px; color: #fff; font-weight: 600; }
.adjust div { height: 17px; display: flex; gap: 5px; justify-content: center; align-items: center; padding-right: 24px; }
.adjust svg { width: 10px; height: 10px; }

.row { flex: none; height: 18px; display: flex; align-items: center; padding: 0 3px; border-bottom: 1px solid #444; }
.row label { display: flex; align-items: center; gap: 2px; margin-left: auto; }
.row input { width: 24px; height: 11px; padding-left: 4px; background: #4a4a4a; }
.filter { height: 19px; }
.kind { width: 41px; }
.kind .glass { width: 7px; height: 7px; margin: 0 0 0 3px; }
.kinds { display: flex; gap: 7px; margin-left: 15px; }
.kinds svg { width: 8px; height: 8px; }
.toggle { width: 5px; height: 11px; margin-left: auto; background: linear-gradient(#aaa 50%, #333 50%); border: 1px solid #333; }
.blend { width: 77px; }
.dim-row, .dim-row svg { color: #a4a4a4; }
.dim-row .pick { background: #595959; }
.dim-row input { color: #6c6c6c; }
.dim-row .drop { background: #585858; }
.lockset { display: flex; gap: 6px; margin-left: 6px; }
.lockset svg { width: 8px; height: 8px; }

.layers { flex: 1; min-height: 0; display: grid; grid-template-columns: 1fr 10px; background: #444; }
.lscroll { background: #3c3c3c; border-left: 1px solid #333; }
.layer { position: relative; height: 37px; display: flex; align-items: center; background: #535353; border-bottom: 1px solid #3c3c3c; color: #f0f0f0; }
.tall { height: 55px; }
.sel { background: #4f5e75; }
.vis { width: 20px; align-self: stretch; display: grid; place-items: center; background: #535353; border-right: 1px solid #444; }
.vis svg { width: 8px; height: 8px; }
.thumb { width: 50px; height: 27px; margin: 0 6px 0 2px; flex: none; }
.blank { width: 52px; height: 34px; margin: 0 5px 0 1px; background: #fff; border: 1px solid #fff; outline: 1px solid #151515; outline-offset: -2px; }
.name { flex: 1; white-space: nowrap; }
.it { font-style: italic; }
.lk { width: 8px; height: 8px; margin-right: 10px; }
.cursor { position: absolute; left: 83px; top: 14px; width: 10px; height: 13px; }
.tip { position: absolute; z-index: 1; left: 87px; top: 27px; padding: 1px 6px 1px 3px; background: #f6f6d4; color: #111; border: 1px solid #222; font: 7px/9px "DejaVu Sans Condensed", "DejaVu Sans", sans-serif; }
.panelfoot { flex: none; height: 12px; display: flex; align-items: center; justify-content: flex-end; gap: 9px; padding-right: 18px; border-top: 1px solid #383838; }
.panelfoot svg { width: 8px; height: 8px; }
.panelfoot .off { color: #858585; }
.panelfoot span { width: 8px; font: italic 7px/8px "Liberation Serif", serif; }
```
